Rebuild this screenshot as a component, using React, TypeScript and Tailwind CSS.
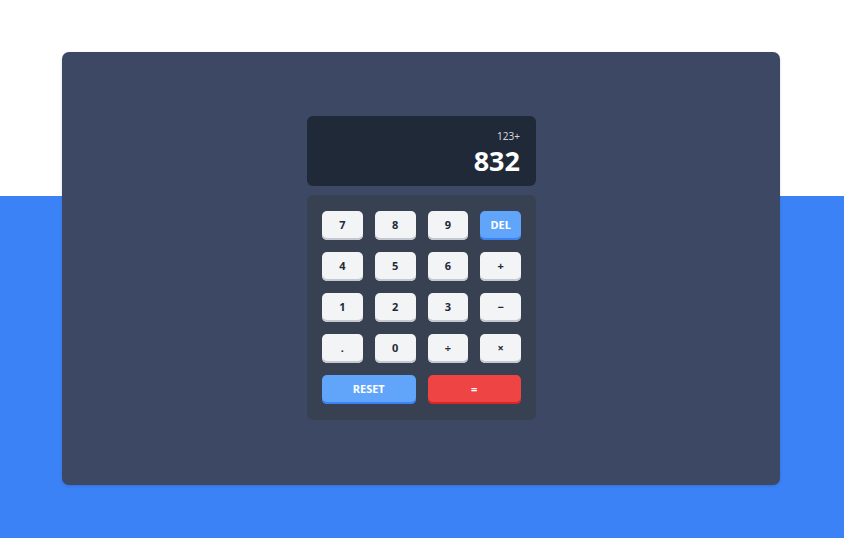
const ROWS = [
  ["7", "8", "9", "DEL"],
  ["4", "5", "6", "+"],
  ["1", "2", "3", "−"],
  [".", "0", "÷", "×"],
];

const Key = ({ label }: { label: string }) => {
  const isDel = label === "DEL";
  return (
    <button
      className={`h-[29px] rounded-[5px] text-[11px] font-bold flex items-center justify-center ${
        isDel
          ? "bg-[#60a5fa] text-white shadow-[inset_0_-2px_0_#3b82f6]"
          : "bg-[#f3f4f6] text-[#1f2937] shadow-[inset_0_-2px_0_#c4c8cf]"
      }`}
    >
      {label}
    </button>
  );
};

export default function App() {
  return (
    <div
      className="w-full h-[538px] pt-[52px] pl-[62px] bg-[linear-gradient(to_bottom,#ffffff_196px,#3b82f6_196px)]"
      style={{ fontFamily: '"Noto Sans", Lato, sans-serif' }}
    >
      <div className="w-[718px] h-[433px] rounded-[7px] bg-[#3d4864] shadow-[0_1px_3px_rgba(0,0,0,0.15)] pt-16">
        <div className="ml-[245px] w-[229px] flex flex-col gap-[9px]">
          <div className="h-[70px] rounded-md bg-[#1f2937] flex flex-col items-end px-4 pt-[15px]">
            <p className="text-[10px] leading-[10px] text-[#d1d5db]">123+</p>
            <p className="text-[27px] leading-[27px] font-bold text-white mt-[6px]">832</p>
          </div>
          <div className="rounded-md bg-[#374151] px-[15px] py-4 flex flex-col gap-3">
            {ROWS.map((row, i) => (
              <div key={i} className="grid grid-cols-4 gap-3">
                {row.map((k) => (
                  <Key key={k} label={k} />
                ))}
              </div>
            ))}
            <div className="grid grid-cols-2 gap-3">
              <button className="h-[29px] rounded-[5px] text-[11px] font-bold text-white bg-[#60a5fa] shadow-[inset_0_-2px_0_#3b82f6]">
                RESET
              </button>
              <button className="h-[29px] rounded-[5px] text-[11px] font-bold text-white bg-[#ef4444] shadow-[inset_0_-2px_0_#dc2626]">
                =
              </button>
            </div>
          </div>
        </div>
      </div>
    </div>
  );
}
